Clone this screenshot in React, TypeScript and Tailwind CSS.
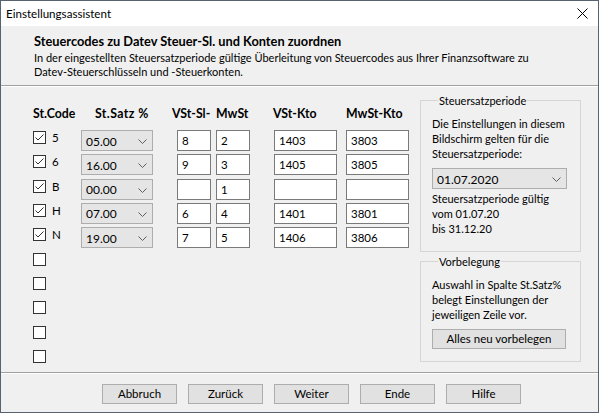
const font = { fontFamily: 'Lato, "Liberation Sans", sans-serif' };

type Row = { code: string; satz: string; vst: string; mwst: string; vkto: string; mkto: string };

const rows: Row[] = [
  { code: '5', satz: '05.00', vst: '8', mwst: '2', vkto: '1403', mkto: '3803' },
  { code: '6', satz: '16.00', vst: '9', mwst: '3', vkto: '1405', mkto: '3805' },
  { code: 'B', satz: '00.00', vst: '', mwst: '1', vkto: '', mkto: '' },
  { code: 'H', satz: '07.00', vst: '6', mwst: '4', vkto: '1401', mkto: '3801' },
  { code: 'N', satz: '19.00', vst: '7', mwst: '5', vkto: '1406', mkto: '3806' },
];

function Chevron() {
  return (
    <svg width="9" height="5" viewBox="0 0 9 5" className="shrink-0">
      <polyline points="0.5,0.5 4.5,4.5 8.5,0.5" fill="none" stroke="#5f5f5f" strokeWidth="1" />
    </svg>
  );
}

function CheckBox({ checked }: { checked?: boolean }) {
  return (
    <div className="w-[13px] h-[13px] border border-[#333333] bg-white flex items-center justify-center shrink-0">
      {checked && (
        <svg width="11" height="11" viewBox="0 0 11 11">
          <polyline points="1.5,5.5 4,8 9.5,2.5" fill="none" stroke="#333333" strokeWidth="1" />
        </svg>
      )}
    </div>
  );
}

function Combo({ value, className = '' }: { value: string; className?: string }) {
  return (
    <div
      className={`h-[21px] border border-[#adadad] bg-[#e5e5e5] flex items-center justify-between pl-[4px] pr-[5px] pt-[2px] text-[12px] ${className}`}
    >
      <span>{value}</span>
      <Chevron />
    </div>
  );
}

function TextBox({ value, className = '' }: { value: string; className?: string }) {
  return (
    <div className={`h-[21px] border border-[#7a7a7a] bg-white flex items-center pl-[4px] ${className}`}>
      {value}
    </div>
  );
}

function Button({ label, className = '' }: { label: string; className?: string }) {
  return (
    <div
      className={`h-[20px] border border-[#adadad] bg-[#e1e1e1] flex items-center justify-center shrink-0 ${className}`}
    >
      {label}
    </div>
  );
}

function GroupBox({ title, className = '', children }: { title: string; className?: string; children: React.ReactNode }) {
  return (
    <fieldset className={`border border-[#d5d5d5] px-[11px] ${className}`}>
      <legend className="ml-[6px] px-[1px] leading-[15px]">{title}</legend>
      {children}
    </fieldset>
  );
}

export default function App() {
  return (
    <div
      className="w-[599px] h-[413px] border border-[#58636f] bg-[#f0f0f0] flex flex-col text-[11.5px] text-black overflow-hidden whitespace-nowrap"
      style={font}
    >
      {/* title bar */}
      <div className="h-[25px] bg-white flex items-center justify-between pl-[5px] pr-[10px] shrink-0 text-[11.6px]">
        <span>Einstellungsassistent</span>
        <svg width="11" height="11" viewBox="0 0 11 11">
          <path d="M0.5,0.5 L10.5,10.5 M10.5,0.5 L0.5,10.5" stroke="#000" strokeWidth="1" />
        </svg>
      </div>

      {/* header */}
      <div className="h-[59px] pl-[33px] pt-[8px] shrink-0">
        <div className="font-bold leading-[15px] text-[12.8px]">Steuercodes zu Datev Steuer-Sl. und Konten zuordnen</div>
        <div className="leading-[14px] mt-[2px] text-[11px]">
          In der eingestellten Steuersatzperiode gültige Überleitung von Steuercodes aus Ihrer Finanzsoftware zu
          <br />
          Datev-Steuerschlüsseln und -Steuerkonten.
        </div>
      </div>
      <div className="h-px bg-[#a0a0a0] shrink-0" />
      <div className="h-px bg-white shrink-0" />

      {/* main */}
      <div className="flex-1 min-h-0 flex">
        <div className="pl-[32px] pt-[19px]">
          <div className="grid grid-cols-[48px_96px_39px_58px_72px_62px] font-bold leading-[15px] h-[24px] text-[12.3px]">
            <div>St.Code</div>
            <div className="pl-[14px] tracking-[0.4px]">St.Satz %</div>
            <div className="ml-[-5px]">VSt-Sl-</div>
            <div>MwSt</div>
            <div className="ml-[-1px]">VSt-Kto</div>
            <div>MwSt-Kto</div>
          </div>
          <div className="flex flex-col gap-[3.33px]">
            {rows.map((r) => (
              <div key={r.code} className="grid grid-cols-[48px_96px_39px_58px_72px_62px] h-[21px]">
                <div className="flex items-start gap-[6px] pt-[1px]">
                  <CheckBox checked />
                  <span className="leading-[13px]">{r.code}</span>
                </div>
                <Combo value={r.satz} className="w-[72px]" />
                <TextBox value={r.vst} className="w-[34px]" />
                <TextBox value={r.mwst} className="w-[34px]" />
                <TextBox value={r.vkto} className="w-[63px]" />
                <TextBox value={r.mkto} className="w-[63px]" />
              </div>
            ))}
            {[0, 1, 2, 3, 4].map((i) => (
              <div key={i} className="h-[21px] pt-[1px]">
                <CheckBox />
              </div>
            ))}
          </div>
        </div>

        <div className="ml-auto mr-[17px] w-[161px] flex flex-col pt-[6px] text-[11px]">
          <GroupBox title="Steuersatzperiode" className="pb-[15px]">
            <div className="leading-[15px] pt-[8px]">
              Die Einstellungen in diesem
              <br />
              Bildschirm gelten für die
              <br />
              Steuersatzperiode:
            </div>
            <Combo value="01.07.2020" className="w-[135px] mt-[7px] h-[20px]" />
            <div className="leading-[15px] mt-[2px]">
              Steuersatzperiode gültig
              <br />
              vom 01.07.20
              <br />
              bis 31.12.20
            </div>
          </GroupBox>
          <GroupBox title="Vorbelegung" className="pb-[12px] mt-[2px]">
            <div className="leading-[15px] pt-[8px]">
              Auswahl in Spalte St.Satz%
              <br />
              belegt Einstellungen der
              <br />
              jeweiligen Zeile vor.
            </div>
            <Button label="Alles neu vorbelegen" className="w-[134px] mt-[7px] text-[11.5px]" />
          </GroupBox>
        </div>
      </div>

      <div className="h-px bg-[#a0a0a0] shrink-0" />
      <div className="h-px bg-white shrink-0" />

      {/* buttons */}
      <div className="h-[38px] flex items-start gap-[11px] pl-[101px] pt-[10px] shrink-0">
        <Button label="Abbruch" className="w-[75px]" />
        <Button label="Zurück" className="w-[75px]" />
        <Button label="Weiter" className="w-[75px]" />
        <Button label="Ende" className="w-[75px]" />
        <Button label="Hilfe" className="w-[75px]" />
      </div>
    </div>
  );
}
